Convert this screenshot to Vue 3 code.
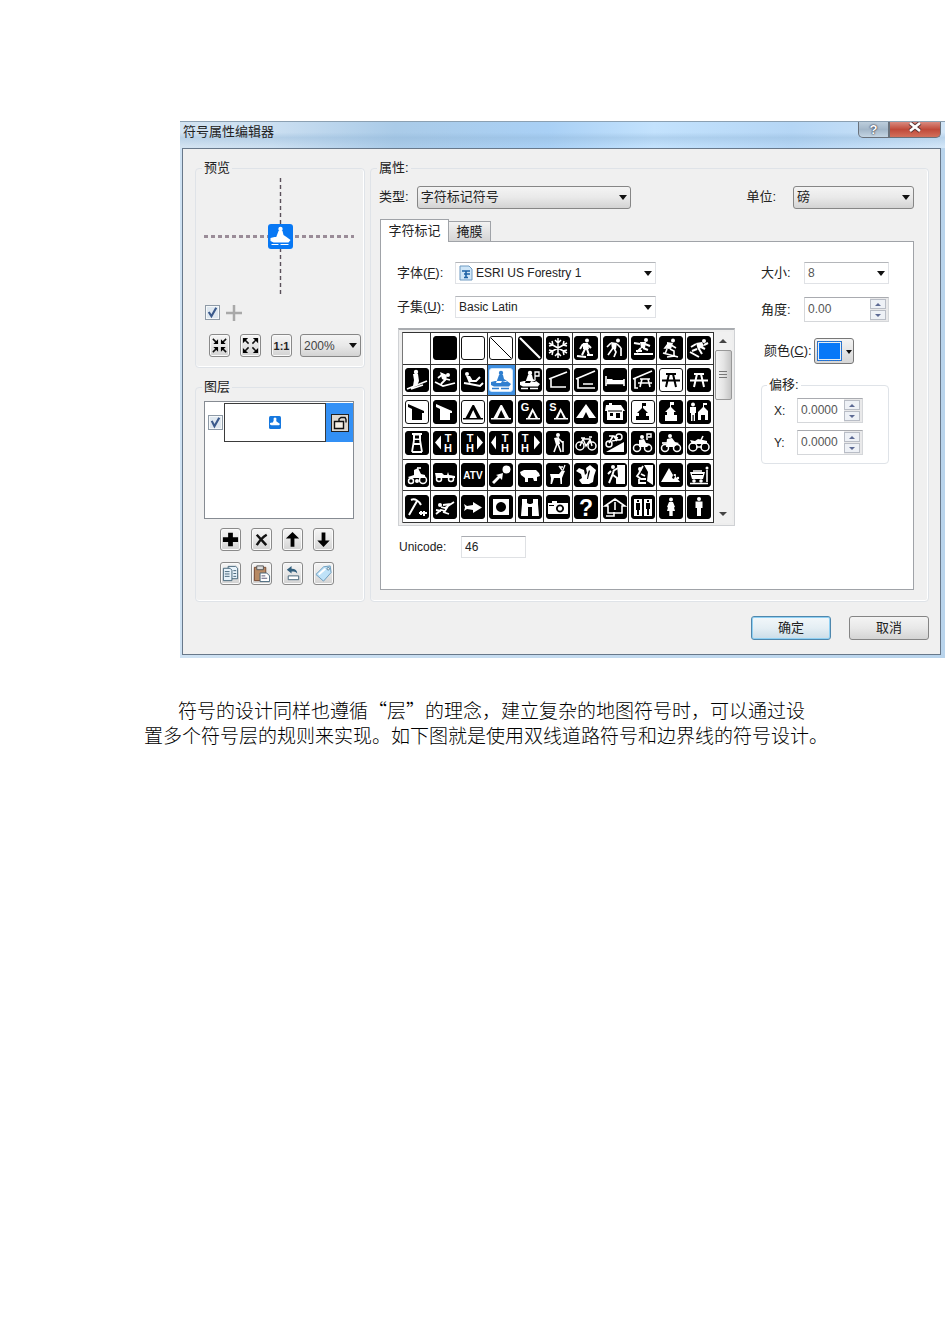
<script setup>
import { ref } from 'vue'

const snowmobile = {
  c: [[12, 5, 2.2]],
  f: 'M10 7h4l1 4 3 2-1 1-4-1-1 2H7zM2 14l4-1h8l4 0 4 3-2 2.500H5L2 17z',
  s: 'M3 20.500h7M12 20.500h8',
}
const tent = 'M11.500 5h1.500l7 13h2v1.500H2V18h2.500zM12.200 10L8.500 18h7.500z'
const table = 'M7 6h10M3 12.500h18M10 6L7 19M14 6l3 13'
const TH = (x) => [[x, 11, 11, 'T'], [x, 21, 11, 'H']]

const glyphs = [
  { blank: true },
  {},
  { light: true },
  { light: true, thin: 'M2 2l20 20' },
  { s: 'M2 2l20 20', w: 2.2 },
  { s: 'M12 2v20M3 7l18 10M21 7L3 17M9 4l3 3 3-3M9 20l3-3 3 3M3 10l4-1-1-4M21 10l-4-1 1-4M3 14l4 1-1 4M21 14l-4 1 1 4', w: 1.5 },
  { c: [[13, 4.500, 2]], f: 'M9 7l5 0 1 6-3 1-3-1z', s: 'M9 8l-3 5M14 9l3 3M11 13l-3 6M13 13l2 6M3 20l9 1M13 19h6', w: 2 },
  { c: [[15, 4.500, 2]], f: 'M8 6l6 1-1 6-4 0z', s: 'M8 7l-4 4M14 8l4 4M11 12l2 4-2 5M10 12l-5 7M18 12v8', w: 1.7 },
  { c: [[15, 4, 2]], f: 'M9 6l6 0-1 6h-4z', s: 'M9 8L3 7M14 8l5 2M12 12l5 2M10 12l-4 4M3 18h19M5 15h6', w: 2 },
  { c: [[14, 4.500, 2]], f: 'M8 6l6 1-2 6-4-1z', s: 'M9 8l-3 4h5M12 9l5 3M11 13l4 2v5M8 13l-2 5M4 17l15 4M8 21l8-1', w: 1.6 },
  { c: [[17, 5, 2]], f: 'M9 7l6-1 2 4-6 4z', s: 'M9 8L4 11M14 11l4 2M10 13l-5 2M12 13l3 5M3 16l9 5M17 9l4-2', w: 2 },

  { c: [[11, 4, 2.200]], f: 'M8 6h5l1 7-2 5H8l1-6z', s: 'M2 21L22 13M6 21l12-4', w: 1.6 },
  { c: [[15, 7, 2]], f: 'M7 4l7 3-1 6-4-2z', s: 'M10 6L5 10M12 12l-4 4M2 14l8 4 12-3M13 11l4 1', w: 1.8 },
  { c: [[6, 6, 2]], f: 'M5 8l4 0 3 5-4 2z', s: 'M3 15l6 1 10 2 3-3M10 13l5 0 4-4', w: 2 },
  snowmobile,
  { ...snowmobile, s: 'M3 20.500h7M12 20.500h8M17 12V4h4v4h-4' },
  { s: 'M3 11L21 4M5 11v8h15', w: 1.6 },
  { s: 'M2 11L21 3M4 11v9h17M9 16h10', w: 1.7 },
  { s: 'M3 8v10M21 11v7M3 15.500h18', f: 'M4 11h5l1 1h11v3H4z', w: 1.6 },
  { s: 'M2 11L21 3M4 10v10h3M9 11h10M7 15h14M11 11l-2 8M17 11l2 8', w: 1.6 },
  { light: true, s: table, w: 2 },
  { s: table, w: 2 },

  { light: true, f: 'M3 4l16 7v2h-2v7H7V9L3 7z' },
  { f: 'M3 4l16 7v2h-2v7H7V9L3 7z' },
  { light: true, f: tent },
  { f: tent },
  { t: [[7, 11, 11, 'G']], f: 'M14.500 8l5.500 10h2v1.500H8V18h1.500zM14.800 12L12 18h5.500z' },
  { t: [[7, 11, 11, 'S']], f: 'M14.500 8l5.500 10h2v1.500H8V18h1.500zM14.800 12L12 18h5.500z' },
  { f: 'M12 4l10 14h-7l-3-6-3 6H2z' },
  { f: 'M3 5h3V3h3v2h9l4 6h-2v9H4v-9H2z', k: 'M5 10.500h14v1H5zM7 13h3v3H7zM13 13h4v5h-4z' },
  { light: true, f: 'M11 3h4v3h-3v2l5 5h-2v3h3v4H5v-4h3v-3H6l5-5z' },
  { f: 'M11 2h4v3h-3v2l5 5h-2v3h3v6H6v-6h2v-3H6l5-5z' },
  { c: [[6, 4.500, 2]], f: 'M3 7h6v6H8v8H6.700v-6H5.500v6H4v-8H3zM11 12l5-5V3h4v2h-3v2l4 4v9h-3v-5h-4v5h-3z' },

  { f: 'M7 2h10v2h-1v5H8V4H7z', k: 'M10 4.500h4v3h-4z', s: 'M9 9L7 21M15 9l2 12M8 13h8M7 21h10', w: 1.8 },
  { f: 'M2 11.500l6-7v14z', t: TH(15) },
  { f: 'M22 11.500l-6-7v14z', t: TH(9) },
  { f: 'M2 11.500l5-7v14z', t: TH(16) },
  { f: 'M22 11.500l-6-7v14z', t: TH(7) },
  { c: [[12, 4, 2]], f: 'M8 7l5-1 1 7-4 1z', s: 'M11 13l-3 8M12 13l3 8M13 8l4 4M17 10v11', w: 1.6 },
  { o: [[6, 15, 4], [18, 15, 4]], s: 'M6 15l3-7h7l2 7M9 8l3 7 4-6M7 7h4M15 6h3', w: 1.4 },
  { f: 'M3 21L21 11v10z', o: [[6, 13, 3], [16, 6, 3]], s: 'M6 12l4-7 5 2M6 5h5l3 5M9 10l5-1', w: 1.7 },
  { c: [[11, 6, 2]], o: [[6, 17, 3.500], [17, 17, 3.500]], f: 'M8 9l5-1 2 4 4 1-3 3H8z', s: 'M16 9V3h4v3h-3', w: 1.5 },
  { c: [[11, 5, 2]], o: [[6, 17, 3.500], [18, 17, 3.500]], f: 'M8 8l5-1 3 4 4 1-5 4H7z', s: 'M3 12h6', w: 1.7 },
  { o: [[6, 16, 4], [18, 16, 4]], f: 'M3 9l5 1 3-2 5 1 4 1v3H5z', s: 'M14 9l2-4M9 16h6', w: 1.6 },

  { o: [[6, 18, 2.500], [18, 17, 3.500]], c: [[12, 18, 2]], f: 'M3 14l6-2V7l4-2 3 6 4 1v3H4z', s: 'M12 5h4', w: 1.6 },
  { o: [[6, 16, 2.500], [18, 16, 2.500]], f: 'M2 10h7l2 2h3l1-3 1 3 6 1v2H3z', w: 1.6 },
  { t: [[12, 15.500, 10, 'ATV']] },
  { c: [[17.500, 6.500, 4]], f: 'M3 19l6-6-2-1 7-2-1 7-2-2-6 6z' },
  { f: 'M2 9l4-2h12l3 3 1 3-3 1v4h-3l-1-3h-5v4H7v-4l-4-3z' },
  { f: 'M4 11l9 0 3-4 3 1-1 2-2 5v6h-1.500l-.5-6H8l-2 6H4.500L5 15z', s: 'M16 7l-3-4M17 7l2-5M14 4h3', w: 1.3 },
  { f: 'M2 8l3-3 5 2 1 5 2-2-1-5 4-3 6 5-2 6-1 6-4 2H8l-3-4 3-2-1-4z', k: 'M14 10l1-3 1 1-2 8h-1z' },
  { f: 'M14 2h8v19h-9l2-8z', c: [[10, 4, 2]], s: 'M11 7l-2 6-3 7M10 8l5-3M10 12l4 3v5M8 8l-3 3', w: 2 },
  { f: 'M13 2h9v20l-6-4 1-9z', c: [[9, 6, 2]], s: 'M9 9l-3 4 4 3h5M8 16v4h7M10 11l4 2M12 3l-4 7', w: 1.8 },
  { f: 'M2 19L10 5l4 7 2-1 1 3 4 5z', k: 'M14 12l2 1-1 3-2-1z', c: [[16, 12, 1], [19, 15, 1.200]] },
  { f: 'M3 9h15l-2 7H5z', k: 'M5 11h11v1H5z', c: [[7, 18, 1.800], [14, 18, 1.800], [20, 5, 1.500]], s: 'M20 7v12M3 20.500h18M6 8h9', w: 1.6 },

  { s: 'M6 5c4-2 8 1 10 5M12 6L4 20M14 18h8M16 16v4M19 16v5', w: 2 },
  { c: [[7, 10, 2]], s: 'M3 19l5-4 4 1 3-5M8 12l4 1 9-6M10 10l8-1M8 16l-5-1M10 17l6 2', w: 1.8 },
  { f: 'M3 9l3 2 6-1V7l9 5.500-9 5.500v-3l-6-1-3 2 1-3.500z' },
  { f: 'M4 4h16v16H4z', k: 'M12 7a5 5 0 1 0 .01 0z' },
  { f: 'M4 4h5v4l2 1h2l2-1V4h5v5l1 12h-7v-9h-4v9H3L4 9z' },
  { f: 'M2 8h4V6h5v2h11v11H2z', k: 'M14 9.500a4 4 0 1 0 .01 0zM3 10h5v1H3z', c: [[14, 13.500, 2.200]] },
  { t: [[12, 20.500, 23, '?']] },
  { s: 'M2 11l10-7 10 7h-3v7H5v-7zM12 7v8M3 21h8v-4', w: 1.6 },
  { f: 'M3 4h8v17H3zM13 4h8v17h-8z', k: 'M5 8h4v7H8v5H6v-5H5zM15 8h4v6h-1v6h-2v-6h-1zM6 5h2v2H6zM16 5h2v2h-2z' },
  { c: [[12, 4.500, 2]], f: 'M10 7h4l2 5-1 .5 1 3.500h-2.300v5h-3.400v-5H8l1-3.500-1-.5z' },
  { c: [[12, 4, 2]], f: 'M8.500 6.500h7V13H14v8h-4v-8H8.500z' },
]

const toolRows = [
  ['添加图层', '删除图层', '上移图层', '下移图层'],
  ['复制', '粘贴', '还原', '标签'],
]

const showLayer = ref(true)
const showCross = ref(true)
const code = ref('46')
const angle = ref('0.00')
const offsetX = ref('0.0000')
const offsetY = ref('0.0000')
const picked = ref(14)

function pick(i) {
  picked.value = i
  code.value = String(32 + i)
}
</script>

<template>
  <main class="page">
    <section class="dialog" aria-label="符号属性编辑器">
      <header class="titlebar">
        <h1>符号属性编辑器</h1>
        <div class="caption">
          <button class="help" aria-label="帮助">?</button>
          <button class="close" aria-label="关闭">
            <svg width="14" height="11" viewBox="0 0 14 11"><path d="M2 1l10 8M12 1L2 9" stroke="#5c3434" stroke-width="4.500" /><path d="M2 1l10 8M12 1L2 9" stroke="#fff" stroke-width="2.600" /></svg>
          </button>
        </div>
      </header>

      <div class="body">
        <div class="columns">
          <div class="side">
            <fieldset class="group preview">
              <legend>预览</legend>
              <svg class="cross" viewBox="0 0 150 118" height="118">
                <path d="M76.500 0v118" stroke="#5a505a" stroke-width="1.400" stroke-dasharray="4 3" />
                <path d="M0 58.500h150" stroke="#9a8c98" stroke-width="3" stroke-dasharray="4 3" />
                <rect x="64" y="46" width="25" height="25" rx="3" fill="#0878f4" />
                <g transform="translate(64.500 46)" fill="#fff">
                  <circle cx="12" cy="5" r="2.200" />
                  <path :d="snowmobile.f" />
                  <path :d="snowmobile.s" stroke="#fff" />
                </g>
              </svg>
              <div class="checks">
                <label class="tick"><input v-model="showCross" type="checkbox" aria-label="显示十字线" /><svg viewBox="0 0 14 14"><path d="M3.500 6.500L6 10.500l4.500-8" /></svg></label>
                <svg width="16" height="16" viewBox="0 0 16 16"><path d="M8 0v16M0 8h16" stroke="#a9a9a9" stroke-width="2.500" /></svg>
              </div>
              <div class="zoombar">
                <button class="tool" aria-label="缩小">
                  <svg viewBox="0 0 20 22"><path d="M3 4l4 4M17 4l-4 4M3 18l4-4M17 18l-4-4" stroke="#111" stroke-width="1.600" /><path d="M8.500 4.500v5h-5zM11.500 4.500v5h5zM8.500 17.500v-5h-5zM11.500 17.500v-5h5z" /></svg>
                </button>
                <button class="tool" aria-label="放大">
                  <svg viewBox="0 0 20 22"><path d="M4 5l4 4M16 5l-4 4M4 17l4-4M16 17l-4-4" stroke="#111" stroke-width="1.600" /><path d="M2 3h5.500L2 8.500zM18 3h-5.500L18 8.500zM2 19h5.500L2 13.500zM18 19h-5.500L18 13.500z" /></svg>
                </button>
                <button class="tool ratio" aria-label="实际大小">1:1</button>
                <span class="combo raised zoom"><select aria-label="缩放比例"><option>200%</option></select></span>
              </div>
            </fieldset>

            <fieldset class="group layers">
              <legend>图层</legend>
              <div class="layerlist">
                <div class="layer">
                  <label class="tick"><input v-model="showLayer" type="checkbox" aria-label="显示图层" /><svg viewBox="0 0 14 14"><path d="M3.500 5.500L6 10.500l4.500-8" /></svg></label>
                  <span class="thumb">
                    <svg width="12" height="13" viewBox="0 0 24 26"><rect width="24" height="26" rx="3" fill="#1678df" /><g fill="#fff"><circle cx="12" cy="6" r="3" /><path :d="snowmobile.f" /></g></svg>
                  </span>
                  <span class="lockcell">
                    <button class="lock" aria-label="锁定">
                      <svg width="16" height="16" viewBox="0 0 16 16" fill="none" stroke="#111" stroke-width="1.400"><path d="M2.500 6.500h9v7h-9z" fill="#f4efe6" /><path d="M7 6V4l2-1.500h4l1 2v3" /></svg>
                    </button>
                  </span>
                </div>
              </div>
              <div v-for="(row, r) in toolRows" :key="r" class="toolrow">
                <button v-for="(name, i) in row" :key="name" class="tool" :aria-label="name">
                  <svg viewBox="0 0 20 22">
                    <path v-if="r === 0 && i === 0" d="M7.500 4h5v4.500H18v5h-5.500V18h-5v-4.500H2v-5h5.500z" />
                    <path v-else-if="r === 0 && i === 1" d="M5 6l10 11M15.500 6Q10 9 5 17" fill="none" stroke="#111" stroke-width="2.600" />
                    <path v-else-if="r === 0 && i === 2" d="M10 3l7 7h-5v8.500H8V10H3z" />
                    <path v-else-if="r === 0" d="M10 19l6.500-7H12V3.500H8V12H3.500z" />
                    <g v-else-if="i === 0" fill="#e8f3fb" stroke="#456478"><path d="M7.500 3.500h8l2 2v11h-10z" /><path d="M2.500 5.500h7l2 2v11h-9z" /><path d="M4 9h5M4 11.500h5M4 14h5M13 8h3M13 11h3M13 14h3" /></g>
                    <g v-else-if="i === 1"><path d="M2.500 4.500h12v14h-12z" fill="#b78a64" stroke="#74472f" /><path d="M5 3h7v4H5z" fill="#ddd" stroke="#555" /><path d="M8.500 10.500h7l3 3v6h-10z" fill="#fff" stroke="#46647a" /><path d="M10 13.500h4M10 16h6" stroke="#557" /></g>
                    <g v-else-if="i === 2"><path d="M5.500 13.500h11v4h-11z" fill="#fff" stroke="#456478" /><path d="M4 7l5-4v3c4 0 6 2 6 5-2-2-3-2-6-2v2z" fill="#33607e" /></g>
                    <g v-else><path d="M2 12l8-8 7-1 1 7-8 9z" fill="#bfe2f8" stroke="#6a9bbd" /><path d="M5 12l7-6" stroke="#fff" stroke-width="2" /><circle cx="15" cy="6" r="1.300" fill="#fff" stroke="#587c94" /></g>
                  </svg>
                </button>
              </div>
            </fieldset>
          </div>

          <fieldset class="group props">
            <legend>属性:</legend>
            <div class="typerow">
              <label for="kind">类型:</label>
              <span class="combo raised kind"><select id="kind"><option>字符标记符号</option></select></span>
              <label for="unit" class="unitlabel">单位:</label>
              <span class="combo raised unit"><select id="unit"><option>磅</option></select></span>
            </div>
            <div class="tabs" role="tablist">
              <button class="tab active" role="tab" aria-selected="true">字符标记</button>
              <button class="tab" role="tab" aria-selected="false">掩膜</button>
            </div>
            <div class="panel">
              <div class="chars">
                <div class="row">
                  <label for="font">字体(<u>F</u>):</label>
                  <span class="combo font">
                    <svg class="fonticon" width="14" height="16" viewBox="0 0 14 16"><path d="M1 1h9l3 3v11H1z" fill="#cfe6f8" stroke="#6e9ac2" /><path d="M3 6h8M7 6v7M5 9h6M5 12.500h4" fill="none" stroke="#1d61a5" stroke-width="1.600" /></svg>
                    <select id="font"><option>ESRI US Forestry 1</option></select>
                  </span>
                </div>
                <div class="row">
                  <label for="subset">子集(<u>U</u>):</label>
                  <span class="combo"><select id="subset"><option>Basic Latin</option></select></span>
                </div>
                <div class="listbox">
                  <div class="grid">
                    <button
                      v-for="(g, i) in glyphs"
                      :key="i"
                      class="cell"
                      :class="{ light: g.light, picked: i === picked }"
                      :aria-label="'字符 ' + (32 + i)"
                      @click="pick(i)"
                    >
                      <svg v-if="!g.blank" width="24" height="24" viewBox="0 0 24 24">
                        <rect class="plate" x="0.500" y="0.500" width="23" height="23" rx="2.500" />
                        <path v-if="g.f" class="ink" fill-rule="evenodd" :d="g.f" />
                        <path v-if="g.k" class="cut" :d="g.k" />
                        <path v-if="g.s" class="line" :d="g.s" :stroke-width="g.w || 1.300" />
                        <path v-if="g.thin" class="line" :d="g.thin" stroke-width="1" />
                        <circle v-for="(c, n) in g.c || []" :key="'c' + n" class="ink" :cx="c[0]" :cy="c[1]" :r="c[2]" />
                        <circle v-for="(c, n) in g.o || []" :key="'o' + n" class="line" :cx="c[0]" :cy="c[1]" :r="c[2]" stroke-width="1.500" />
                        <text v-for="(t, n) in g.t || []" :key="'t' + n" class="ink letter" :x="t[0]" :y="t[1]" :font-size="t[2]">{{ t[3] }}</text>
                      </svg>
                    </button>
                  </div>
                  <div class="scroll">
                    <button class="arrow up" aria-label="向上滚动"></button>
                    <span class="thumbbar"></span>
                    <button class="arrow down" aria-label="向下滚动"></button>
                  </div>
                </div>
                <div class="row">
                  <label for="code" class="codelabel">Unicode:</label>
                  <input id="code" v-model="code" class="code" type="text" />
                </div>
              </div>

              <div class="metrics">
                <div class="row">
                  <label for="size">大小:</label>
                  <span class="combo"><select id="size"><option>8</option></select></span>
                </div>
                <div class="row">
                  <label for="angle">角度:</label>
                  <span class="spin"><input id="angle" v-model="angle" type="text" /><span class="steps"><button class="up" aria-label="增大角度"></button><button class="down" aria-label="减小角度"></button></span></span>
                </div>
                <div class="row colour">
                  <label for="colour">颜色(<u>C</u>):</label>
                  <button id="colour" class="swatch"><span></span></button>
                </div>
                <fieldset class="offset">
                  <legend>偏移:</legend>
                  <div class="row">
                    <label for="ox">X:</label>
                    <span class="spin"><input id="ox" v-model="offsetX" type="text" /><span class="steps"><button class="up" aria-label="增大 X"></button><button class="down" aria-label="减小 X"></button></span></span>
                  </div>
                  <div class="row">
                    <label for="oy">Y:</label>
                    <span class="spin"><input id="oy" v-model="offsetY" type="text" /><span class="steps"><button class="up" aria-label="增大 Y"></button><button class="down" aria-label="减小 Y"></button></span></span>
                  </div>
                </fieldset>
              </div>
            </div>
          </fieldset>
        </div>

        <footer class="actions">
          <button class="push primary">确定</button>
          <button class="push">取消</button>
        </footer>
      </div>
    </section>

    <p class="prose">符号的设计同样也遵循“层”的理念，建立复杂的地图符号时，可以通过设<br />置多个符号层的规则来实现。如下图就是使用双线道路符号和边界线的符号设计。</p>
  </main>
</template>

<style>
body {
  background: #fff;
}
</style>

<style scoped>
* {
  box-sizing: border-box;
}
.page {
  padding: 121px 5px 40px 180px;
  font: 13px/20px "Liberation Sans", "Noto Sans CJK SC", sans-serif;
  color: #222;
}
button,
input,
select {
  font: inherit;
  color: inherit;
  margin: 0;
  padding: 0;
}
svg {
  display: block;
}
.dialog {
  padding: 0 4px 3px 2px;
  border-top: 1px solid #8ba0b2;
  background: linear-gradient(90deg, #cfe2f3, #b9d4ec);
}
.titlebar {
  display: flex;
  justify-content: space-between;
  height: 26px;
  margin: 0 -4px 0 -2px;
  padding: 0 4px 0 3px;
  background:
    linear-gradient(180deg, transparent 40%, rgba(140, 178, 212, 0.35) 60%, transparent 95%),
    linear-gradient(90deg, #d3e3f1 0, #cbdff1 12%, #aacbe8 28%, #a9d0f5 48%, #c3e2fd 62%, #b5d6f5 80%, #d2e6f8 100%);
}
h1 {
  margin: 0;
  font-size: 13px;
  line-height: 20px;
  font-weight: 400;
}
.caption {
  display: flex;
  height: 16px;
}
.caption button {
  border: 1px solid #69717b;
  border-top: 0;
  line-height: 12px;
}
.help {
  width: 31px;
  border-radius: 0 0 0 5px;
  background: linear-gradient(#bccddc, #a3b7c9 50%, #c4d5e3);
  color: #fff;
  font-weight: 700;
  text-shadow: 0 0 2px #223, 0 0 1px #223;
}
.close {
  display: flex;
  justify-content: center;
  width: 52px;
  border-radius: 0 0 5px 0;
  background: linear-gradient(#d98a7f, #c04a3a 50%, #d3705c);
}
.body {
  padding: 9px 11px 14px 12px;
  border: 1px solid #68788a;
  background: #f0f0f0;
}
.columns {
  display: flex;
  gap: 5px;
}
.side {
  display: flex;
  flex-direction: column;
  flex: 0 0 170px;
  gap: 9px;
}
fieldset {
  min-width: 0;
  margin: 0;
  border: 1px solid #dfe3e8;
  border-radius: 4px;
}
.group {
  box-shadow: inset 0 -1px #fff, inset -1px 0 #fff;
}
legend {
  padding: 0 2px;
  line-height: 20px;
}
.preview {
  padding: 0 3px 10px 6px;
}
.cross {
  width: 150px;
  margin-left: 2px;
}
.checks {
  display: flex;
  align-items: center;
  gap: 6px;
  margin: 9px 0 13px 3px;
}
.tick {
  position: relative;
  display: block;
  flex: none;
  width: 15px;
  height: 16px;
}
.tick input {
  appearance: none;
  display: block;
  width: 15px;
  height: 15px;
  border: 1px solid #8e9aa6;
  background: #dfe8f0;
  box-shadow: inset 0 0 0 1px #f5f8fa;
}
.tick svg {
  position: absolute;
  inset: 0;
  fill: none;
  stroke: #3b5a8c;
  stroke-width: 2;
  pointer-events: none;
}
.tick input:not(:checked) + svg {
  display: none;
}
.zoombar {
  display: flex;
  gap: 10px;
  margin-left: 7px;
}
.zoombar .zoom {
  flex: 1;
  margin-left: -2px;
  color: #444;
}
.tool {
  display: flex;
  align-items: center;
  justify-content: center;
  flex: none;
  width: 21px;
  height: 23px;
  border: 1px solid #8a8a8a;
  border-radius: 3px;
  background: linear-gradient(#f5f5f5, #e6e6e6 50%, #d2d2d2);
  box-shadow: inset 0 0 0 1px #fafafa;
}
.tool svg {
  width: 19px;
  height: 21px;
}
.ratio {
  font-size: 11px;
  font-weight: 700;
}
.layers {
  padding: 4px 10px 16px 6px;
}
.layerlist {
  height: 118px;
  margin-left: 2px;
  border: 1px solid #868b92;
  background: #fff;
}
.layer {
  display: flex;
  height: 40px;
  padding-top: 1px;
}
.layer .tick {
  align-self: center;
  margin: 0 1px 0 3px;
}
.thumb {
  display: flex;
  flex: 1;
  align-items: center;
  justify-content: center;
  border: 1px solid #3b3b3b;
}
.lockcell {
  display: flex;
  align-items: center;
  justify-content: center;
  width: 27px;
  background: #3390f5;
}
.lock {
  width: 18px;
  height: 18px;
  border: 1px solid #222;
  background: #ddd8d0;
}
.toolrow {
  display: flex;
  gap: 10px;
  margin: 9px 0 11px 18px;
}
.toolrow:last-child {
  margin-top: 0;
  margin-bottom: 0;
}
.props {
  flex: 1;
  padding: 7px 14px 10px 6px;
}
.typerow {
  display: flex;
  align-items: center;
  height: 24px;
  margin-left: 2px;
}
.kind {
  width: 214px;
  margin-left: 8px;
}
.unitlabel {
  margin-left: auto;
}
.unit {
  width: 121px;
  margin-left: 17px;
}
.combo {
  position: relative;
  display: block;
  height: 22px;
}
.combo::after {
  content: "";
  position: absolute;
  top: 9px;
  right: 4px;
  border: 4px solid transparent;
  border-top: 5px solid #111;
  border-bottom: 0;
  pointer-events: none;
}
.combo select {
  appearance: none;
  display: block;
  width: 100%;
  height: 100%;
  padding: 0 16px 0 3px;
  border: 1px solid #e0e2e6;
  border-top-color: #b4b6ba;
  border-radius: 0;
  background: #fff;
  font-size: 12px;
}
.combo.raised {
  height: 23px;
}
.combo.raised select {
  border: 1px solid #868686;
  border-radius: 3px;
  background: linear-gradient(#f4f4f4, #e9e9e9 50%, #d3d3d3);
  font-size: 13px;
}
.combo.zoom select {
  font-size: 12px;
}
.combo.font select {
  padding-left: 20px;
}
.fonticon {
  position: absolute;
  top: 3px;
  left: 4px;
}
.tabs {
  display: flex;
  align-items: flex-end;
  height: 22px;
  margin: 10px 0 0 3px;
}
.tab {
  width: 42px;
  height: 20px;
  border: 1px solid #a0a3a8;
  border-left: 0;
  border-bottom: 0;
  background: linear-gradient(#f2f2f2, #d4d4d4);
  line-height: 18px;
}
.tab.active {
  position: relative;
  z-index: 1;
  width: 69px;
  height: 23px;
  margin-bottom: -1px;
  border-left: 1px solid #a0a3a8;
  background: #fff;
}
.panel {
  display: flex;
  justify-content: space-between;
  margin-left: 3px;
  padding: 20px 24px 31px 16px;
  border: 1px solid #a0a3a8;
  background: #fff;
}
.row {
  display: flex;
  align-items: center;
}
.chars {
  width: 338px;
}
.chars .row {
  height: 22px;
  margin-bottom: 12px;
}
.chars .row label {
  width: 58px;
}
.chars .combo {
  width: 201px;
}
.listbox {
  display: flex;
  height: 198px;
  margin: -2px 0 10px 1px;
  padding: 2px 2px 2px 3px;
  border: 1px solid #cfd1d4;
  border-top: 2px solid #a9acb0;
  background: #eee;
}
.grid {
  display: grid;
  grid-template-columns: repeat(11, 1fr);
  grid-template-rows: repeat(6, 1fr);
  flex: 1;
  border-top: 1px solid #333;
  border-left: 1px solid #777;
  background: #fff;
}
.cell {
  display: flex;
  align-items: center;
  justify-content: center;
  min-width: 0;
  border: 0;
  border-right: 1px solid #333;
  border-bottom: 1px solid #333;
  background: #fff;
  --ink: #fff;
  --plate: #000;
  --edge: #000;
}
.cell svg {
  flex: none;
}
.cell.light {
  --ink: #000;
  --plate: #fff;
  --edge: #111;
}
.cell.picked {
  background: #3f8fe0;
  --ink: #2f7fd0;
  --plate: #fff;
  --edge: #cfe6fb;
}
.plate {
  fill: var(--plate);
  stroke: var(--edge);
}
.ink {
  fill: var(--ink);
}
.cut {
  fill: var(--plate);
}
.line {
  fill: none;
  stroke: var(--ink);
}
.letter {
  text-anchor: middle;
  font-family: "Liberation Sans", sans-serif;
  font-weight: 700;
}
.scroll {
  display: flex;
  flex-direction: column;
  align-items: center;
  width: 18px;
  background: #f0f0f0;
}
.arrow {
  width: 17px;
  height: 18px;
  border: 0;
  background: none;
}
.arrow::after,
.steps button::after {
  content: "";
  display: block;
  width: 0;
  margin: auto;
  border: 4px solid transparent;
}
.arrow.up::after,
.steps .up::after {
  border-top: 0;
  border-bottom-color: #444;
}
.arrow.down::after,
.steps .down::after {
  border-bottom: 0;
  border-top-color: #444;
}
.thumbbar {
  width: 17px;
  height: 50px;
  margin-bottom: auto;
  border: 1px solid #989898;
  border-radius: 2px;
  background:
    repeating-linear-gradient(#777 0 1px, transparent 1px 3px) center / 8px 9px no-repeat,
    linear-gradient(90deg, #f5f5f5, #e4e4e4 50%, #c6c6c6);
}
.chars .row .codelabel {
  width: 64px;
  padding-left: 2px;
  font-size: 12px;
}
.chars .row:last-child {
  margin-bottom: 0;
}
.code {
  width: 65px;
  height: 22px;
  padding-left: 3px;
  border: 1px solid #dfe1e4;
  border-top-color: #a9abb0;
  font-size: 12px;
}
.metrics {
  width: 128px;
}
.metrics .row > .combo,
.metrics > .row > .spin {
  width: 85px;
  margin-left: auto;
}
.metrics > .row {
  height: 22px;
}
.metrics > .row + .row {
  height: 25px;
  margin-top: 13px;
}
.metrics > .row + .colour {
  height: 26px;
  margin: 16px 0 11px 3px;
}
.metrics select,
.spin input {
  color: #555;
}
.spin {
  display: flex;
  height: 25px;
  padding-right: 2px;
  border: 1px solid #d5d7da;
  border-top-color: #a9abb0;
  background: #e9e9ea;
}
.spin input {
  flex: 1;
  min-width: 0;
  width: 0;
  padding: 0 0 2px 3px;
  border: 0;
  background: #fff;
  font-size: 12px;
}
.steps {
  display: flex;
  flex-direction: column;
  gap: 1px;
  padding: 1px 0;
}
.steps button {
  flex: 1;
  width: 16px;
  border: 1px solid #b9bdc6;
  background: #eef1f6;
}
.steps button::after {
  border-width: 3px;
}
.steps .up::after {
  border-top-width: 0;
  border-bottom-color: #5d6a94;
}
.steps .down::after {
  border-bottom-width: 0;
  border-top-color: #5d6a94;
}
.swatch {
  position: relative;
  width: 40px;
  height: 26px;
  margin-left: auto;
  margin-right: 35px;
  padding: 2px 11px 2px 2px;
  border: 1px solid #777;
  border-radius: 3px;
  background: linear-gradient(#f4f4f4, #d6d6d6);
}
.swatch span {
  display: block;
  height: 20px;
  border: 1px dotted #4c6fa0;
  background: #0878f8;
  box-shadow: inset 0 0 0 1px #e8eef4;
}
.swatch::after {
  content: "";
  position: absolute;
  top: 11px;
  right: 1px;
  border: 3px solid transparent;
  border-top: 4px solid #111;
  border-bottom: 0;
}
.offset {
  padding: 3px 25px 8px 5px;
}
.offset .row {
  justify-content: space-between;
  padding-left: 7px;
}
.offset .row + .row {
  margin-top: 7px;
}
.offset .spin {
  width: 66px;
}
.offset .row label {
  font-size: 12px;
}
.actions {
  display: flex;
  justify-content: flex-end;
  gap: 18px;
  margin-top: 14px;
}
.push {
  width: 80px;
  height: 24px;
  border: 1px solid #858585;
  border-radius: 3px;
  background: linear-gradient(#f4f4f4, #e8e8e8 50%, #d4d4d4);
  line-height: 20px;
}
.primary {
  border-color: #4f87ad;
  background: linear-gradient(#f2f7fa, #e4eef4 50%, #cbdde8);
  box-shadow: inset 0 0 0 1px #8fd0f3;
}
.prose {
  margin: 39px 0 0 -36px;
  color: #000;
  font: 300 19px/25px "Noto Sans CJK SC", sans-serif;
  text-indent: 34px;
  white-space: nowrap;
}
</style>
